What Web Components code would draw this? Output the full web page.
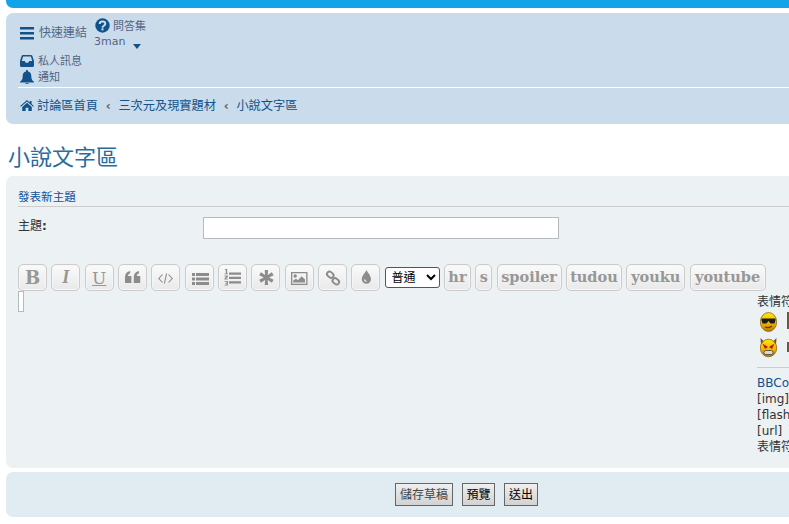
<!DOCTYPE html>
<html><head><meta charset="utf-8"><style>
html,body{margin:0;padding:0;background:#fff;overflow:hidden;height:524px}
body{font:11px "DejaVu Sans","Noto Sans CJK TC",sans-serif;color:#333}
</style></head><body>
<x-page>
  <x-topbar></x-topbar>
  <x-navbar></x-navbar>
  <x-title>小說文字區</x-title>
  <x-editor-panel></x-editor-panel>
  <x-submit-panel></x-submit-panel>
</x-page>
<script>
const I={
bars:'<svg viewBox="0 0 14 13" width="14" height="13"><path fill="#105289" d="M0 0h14v2.6H0zM0 5h14v2.6H0zM0 10h14v2.6H0z"/></svg>',
q:'<svg viewBox="0 0 16 16" width="15" height="15"><circle cx="8" cy="8" r="7.7" fill="#105289"/><path fill="none" stroke="#cadceb" stroke-width="2.1" d="M5 6.3C5 4.6 6.4 3.7 8 3.7c1.8 0 3 1 3 2.4 0 2.2-3 2.1-3 4.2"/><rect x="6.9" y="11" width="2.2" height="2.2" fill="#cadceb"/></svg>',
inbox:'<svg style="margin-top:-2px" viewBox="0 0 14 12" width="14" height="12"><path fill="#105289" d="M3 0h8c.6 0 1 .3 1.3.8L14 6v4.5c0 .9-.6 1.500-1.500 1.500h-11C.6 12 0 11.400 0 10.500V6L1.700.8C2 .3 2.400 0 3 0zM3.100 1.500 1.800 6h3l.9 1.800h2.600L9.200 6h3l-1.300-4.500z"/></svg>',
bell:'<svg style="margin-top:-2px" viewBox="0 0 14 14.500" width="14" height="14.500"><path fill="#105289" d="M7 0c.6 0 1 .4 1 1v.6c2.200.4 3.300 2.200 3.300 4.400 0 3 .8 4.300 2.700 5.700v.8H0v-.8C1.900 10.300 2.700 9 2.700 6c0-2.200 1.100-4 3.300-4.400V1c0-.6.4-1 1-1zM5.200 13.200h3.600C8.700 14 7.900 14.400 7 14.400s-1.700-.4-1.800-1.200z"/></svg>',
home:'<svg viewBox="0 0 15 12" width="14" height="11"><path fill="#105289" d="M7.500 0 10.500 2.600V1h2v3.300L15 6.500l-.8.9-6.700-5.800L.8 7.400 0 6.500zM2.300 7.500l5.200-4.400 5.200 4.400V12H9V8.500H6V12H2.300z"/></svg>'};
function def(name,html){customElements.define(name,class extends HTMLElement{constructor(){super();this.attachShadow({mode:'open'}).innerHTML=typeof html==='function'?html(this):html}})}
const G='#8c8c8c';
const S='viewBox="0 0 29 27" width="29" height="27"';
const T={
code:`<svg ${S}><path fill="none" stroke="${G}" stroke-width="1.100" d="M11.500 10.500 7.800 14.500l3.700 4M17.500 10.500l3.700 4-3.700 4M15.600 9.500l-2.200 10"/></svg>`,
quote:`<svg ${S}><path fill="${G}" d="M7 13c0-3.300 1.800-5.500 5.200-6v2.400c-1.500.3-2.200 1.300-2.200 2.600h3.400v7H7zM15.800 13c0-3.300 1.800-5.500 5.200-6v2.400c-1.500.3-2.200 1.300-2.200 2.600h3.400v7h-6.400z"/></svg>`,
ul:`<svg ${S}><path fill="${G}" d="M7 9h3v3H7zM11 9h13v3H11zM7 13.500h3v3H7zM11 13.500h13v3H11zM7 18h3v3H7zM11 18h13v3H11z"/></svg>`,
ol:`<svg ${S}><path fill="${G}" d="M11 8.500h12v2.300H11zM11 12.800h12v2.300H11zM11 17.200h12v2.300H11zM7.300 5h1.900v4.500H10v.8H6.500v-.8h1.300V6.100l-1 .2zM6.500 11.500h3.400v1.600L8 14.700h2v.9H6.500v-1.400l2-1.800h-2zM6.500 17h3.400v4.500H6.500v-.8h2.100v-1H7.300v-.8h1.300v-1.100H6.500z"/></svg>`,
star:`<svg ${S}><path fill="${G}" d="M13.700 6h3.400l-.4 5 4.200-2.700 1.700 3-4.500 2.200 4.500 2.200-1.700 3-4.200-2.700.4 5h-3.400l.4-5-4.200 2.700-1.700-3 4.500-2.200-4.500-2.200 1.700-3 4.200 2.700z"/></svg>`,
img:`<svg ${S}><path fill="${G}" fill-rule="evenodd" d="M6 8h16.500v13H6zM7.300 9.300v10.400h13.900V9.300z"/><circle cx="10.200" cy="12" r="1.700" fill="${G}"/><path fill="${G}" d="M8.200 18.500v-2l2.800-1.800 2 1.500 3.600-4 3.400 3.400v2.900z"/></svg>`,
link:`<svg ${S}><g fill="none" stroke="${G}" stroke-width="1.900"><rect x="8.800" y="8.200" width="7" height="5" rx="2.500" transform="rotate(40 12.300 10.700)"/><rect x="14.300" y="14.800" width="7" height="5" rx="2.500" transform="rotate(40 17.800 17.300)"/></g></svg>`,
drop:`<svg ${S}><path fill="${G}" fill-rule="evenodd" d="M15.500 6c1.300 3 4.500 5.600 4.500 9.200a4.600 4.600 0 0 1-9.200 0C10.800 11.600 14.200 9 15.500 6zM13 15.400c0 1.500 1 2.500 2.300 2.500v-1.300c-.7 0-1-.6-1-1.200z"/></svg>`};
def('x-page',`<style>:host{display:block;width:921px;padding:0 6px}</style><slot></slot>`);
def('x-topbar',`<style>:host{display:block;height:8px;background:#12a3eb;border-radius:0 0 7px 7px;margin-bottom:5px}</style>`);
def('x-nav-link',`<style>:host{display:flex;align-items:center;color:#536482;line-height:14px;white-space:nowrap}
::slotted(svg){flex:none}span{margin-left:var(--g,4px);font-size:var(--f,11px);position:relative;top:var(--t,0)}</style><slot name="i"></slot><span><slot></slot></span>`);
def('x-navbar',`<style>
:host{display:block;background:#cadceb;border-radius:7px;padding:5px 12px 0 12px;height:106px}
.top{display:flex;padding-left:2px}
.ql{margin-top:8px;--f:12px;--g:5px;height:14px}
.faq{margin-left:8px;display:flex;flex-direction:column}
.faq x-nav-link{--g:3px;--t:1px}
.user{display:flex;color:#536482;line-height:14px;margin:2px 0 0 -1px;height:17px}
.caret{width:0;height:0;border:4.500px solid transparent;border-top:5px solid #105289;border-bottom:0;margin:9px 0 0 8px}
.st{padding-left:2px;margin-top:3px;display:flex;flex-direction:column;gap:2px}
.st x-nav-link{height:14px}
hr{border:0;border-top:1px solid #fff;margin:2px 0 0}
.crumbs{display:flex;align-items:center;color:#105289;font-size:12.200px;padding:10px 0 0 2px;line-height:17px;white-space:nowrap}
.crumbs svg{margin:-3px 3px 0 0}
.sep{width:12px;margin:0 4.250px;text-align:center;color:#536482;font-size:12px;font-weight:700}
</style>
<div class="top"><x-nav-link class="ql">${I.bars.replace('<svg','<svg slot="i"')}快速連結</x-nav-link>
<div class="faq"><x-nav-link>${I.q.replace('<svg','<svg slot="i"')}問答集</x-nav-link>
<div class="user">3man<i class="caret"></i></div></div></div>
<div class="st"><x-nav-link>${I.inbox.replace('<svg','<svg slot="i"')}私人訊息</x-nav-link><x-nav-link>${I.bell.replace('<svg','<svg slot="i"')}通知</x-nav-link></div>
<hr>
<div class="crumbs">${I.home}<span>討論區首頁</span><span class="sep">‹</span><span>三次元及現實題材</span><span class="sep">‹</span><span>小說文字區</span></div>`);
def('x-title',`<style>:host{display:block;color:#2a6c9e;font-size:22px;font-weight:400;line-height:26px;margin:21px 0 5px 2px;height:26px}</style><slot></slot>`);
def('x-tool',`<style>:host{display:block;flex:none;width:29px}
button{display:flex;align-items:center;justify-content:center;box-sizing:border-box;width:100%;height:27px;padding:0;border:1px solid #cbcbcb;border-radius:5px;background:linear-gradient(#fafafa,#e9e9e9);color:#979797;font:bold 14.500px "DejaVu Serif",serif;box-shadow:inset 0 0 0 1px #f6f6f6;line-height:1}
::slotted(svg){flex:none}</style><button><slot></slot></button>`);
def('x-smiley',h=>{const k=h.getAttribute('kind');return `<style>:host{display:block;width:18px;height:20px}svg{display:block}</style><svg viewBox="0 0 18 20" width="18" height="20"><defs><linearGradient id="s" x1="0" y1="0" x2="0" y2="1"><stop offset="0" stop-color="#ffe600"/><stop offset=".55" stop-color="#f4b800"/><stop offset="1" stop-color="#b87400"/></linearGradient></defs>${k==='cool'?
`<ellipse cx="8.500" cy="10" rx="8.200" ry="9.500" fill="url(#s)" stroke="#7a5a10" stroke-width=".7"/><path fill="#1c1c1c" d="M1.500 6.500h14v1.800l-1 3.200H10.500L8.500 9l-2 2.500H2.500L1.500 8.300z"/><path fill="none" stroke="#5a3c00" stroke-width="1.300" d="M5 15c2.200.8 5 .6 7-1"/>`:
k==='devil'?
`<path fill="#6e5228" d="M.5 0l4 4-3.500 3zM16.500 0l-4 4 3.500 3z"/><ellipse cx="8.500" cy="10" rx="8.200" ry="8.800" fill="url(#s)" stroke="#7a5a10" stroke-width=".7"/><path fill="#b81414" d="M2.500 5.500 8 9 5 11zM14.500 5.500 9 9l3 2z"/><rect x="4" y="12.500" width="9" height="4" rx="1.800" fill="#d8d8d8" stroke="#444" stroke-width=".8"/>`:
`<rect x="0" y="${k==='dark2'?4:0}" width="3" height="${k==='dark2'?10:17}" fill="#6b5a3a"/>`}</svg>`});
def('x-toolbar',`<style>:host{display:flex;align-items:flex-start;gap:4.330px}
select{height:21px;width:55px;margin:3px 0 0 0;font:12px "DejaVu Sans","Noto Sans CJK TC",sans-serif;color:#000;background:#fff;border:1px solid #555;border-radius:3px;padding:0 0 0 2px;flex:none}
</style>
<x-tool><b style="font:bold 18px 'DejaVu Serif',serif">B</b></x-tool><x-tool><i style="font:italic 700 18px 'Liberation Serif',serif">I</i></x-tool><x-tool><u style="font:400 17px 'DejaVu Serif',serif">U</u></x-tool>
<x-tool>${T.quote}</x-tool><x-tool>${T.code}</x-tool><x-tool>${T.ul}</x-tool><x-tool>${T.ol}</x-tool><x-tool>${T.star}</x-tool><x-tool>${T.img}</x-tool><x-tool>${T.link}</x-tool><x-tool>${T.drop}</x-tool>
<select><option>普通</option></select>
<x-tool style="width:27px">hr</x-tool><x-tool style="width:17px">s</x-tool><x-tool style="width:65px">spoiler</x-tool><x-tool style="width:56px">tudou</x-tool><x-tool style="width:59px">youku</x-tool><x-tool style="width:76px">youtube</x-tool>`);
def('x-side',`<style>:host{display:block;width:140px;color:#333;font-size:12px;line-height:16px;white-space:nowrap}
.smi{display:grid;grid-template-columns:repeat(2,27px);row-gap:6px;margin:2px 0 0 2.500px}
hr{border:0;border-top:1px solid #ccc;margin:9px 0 7px}
a{color:#105289}
s{text-decoration:none;margin-left:2px}
</style>
<div>表情符號</div>
<div class="smi"><x-smiley kind="cool"></x-smiley><x-smiley kind="dark"></x-smiley><x-smiley kind="devil"></x-smiley><x-smiley kind="dark2"></x-smiley></div>
<hr>
<div><a>BBCode</a> 已啟用</div><div>[img] 已啟用</div><div>[flash] 已關閉</div><div>[url] <s>已啟用</s></div><div>表情符號 已啟用</div>`);
def('x-editor-panel',`<style>:host{display:block;background:#ecf1f3;border-radius:7px;padding:14px 12px 0;height:278px;margin-bottom:4px}
h3{margin:0;font-size:11.550px;font-weight:400;color:#115098;line-height:15px;border-bottom:1px solid #ccc;padding-bottom:1px}
.sub{display:flex;margin-top:10px;height:22px}
label{width:185px;font-size:12px;font-weight:400;line-height:18px;color:#333}
input{box-sizing:border-box;width:356px;height:22px;border:1px solid #b4bac0;background:#fff;margin:0;padding:0}
x-toolbar{margin-top:25px}
textarea{display:block;box-sizing:border-box;width:6px;height:21px;margin:0;padding:0;border:1px solid #b4bac0;background:#fff;resize:none;flex:none}
.main{display:flex}
x-side{margin:3px 0 0 733px}
</style>
<h3>發表新主題</h3>
<div class="sub"><label>主題<b>:</b></label><input></div>
<x-toolbar></x-toolbar>
<div class="main"><textarea></textarea><x-side></x-side></div>`);
def('x-btn',`<style>:host{display:block}button{box-sizing:border-box;height:23px;padding:1px var(--p,4px) 0;border:1px solid #666;background:linear-gradient(#efefef,#d2d2d2);font:12px "DejaVu Sans","Noto Sans CJK TC",sans-serif;color:var(--c,#000);line-height:20px}</style><button><slot></slot></button>`);
def('x-submit-panel',`<style>:host{display:flex;justify-content:center;gap:9px;background:#e1ebf2;border-radius:7px;padding:11px 0 0;height:34px}</style><x-btn style="--c:#444">儲存草稿</x-btn><x-btn style="--p:3.500px">預覽</x-btn><x-btn>送出</x-btn>`);
</script>
</body></html>
